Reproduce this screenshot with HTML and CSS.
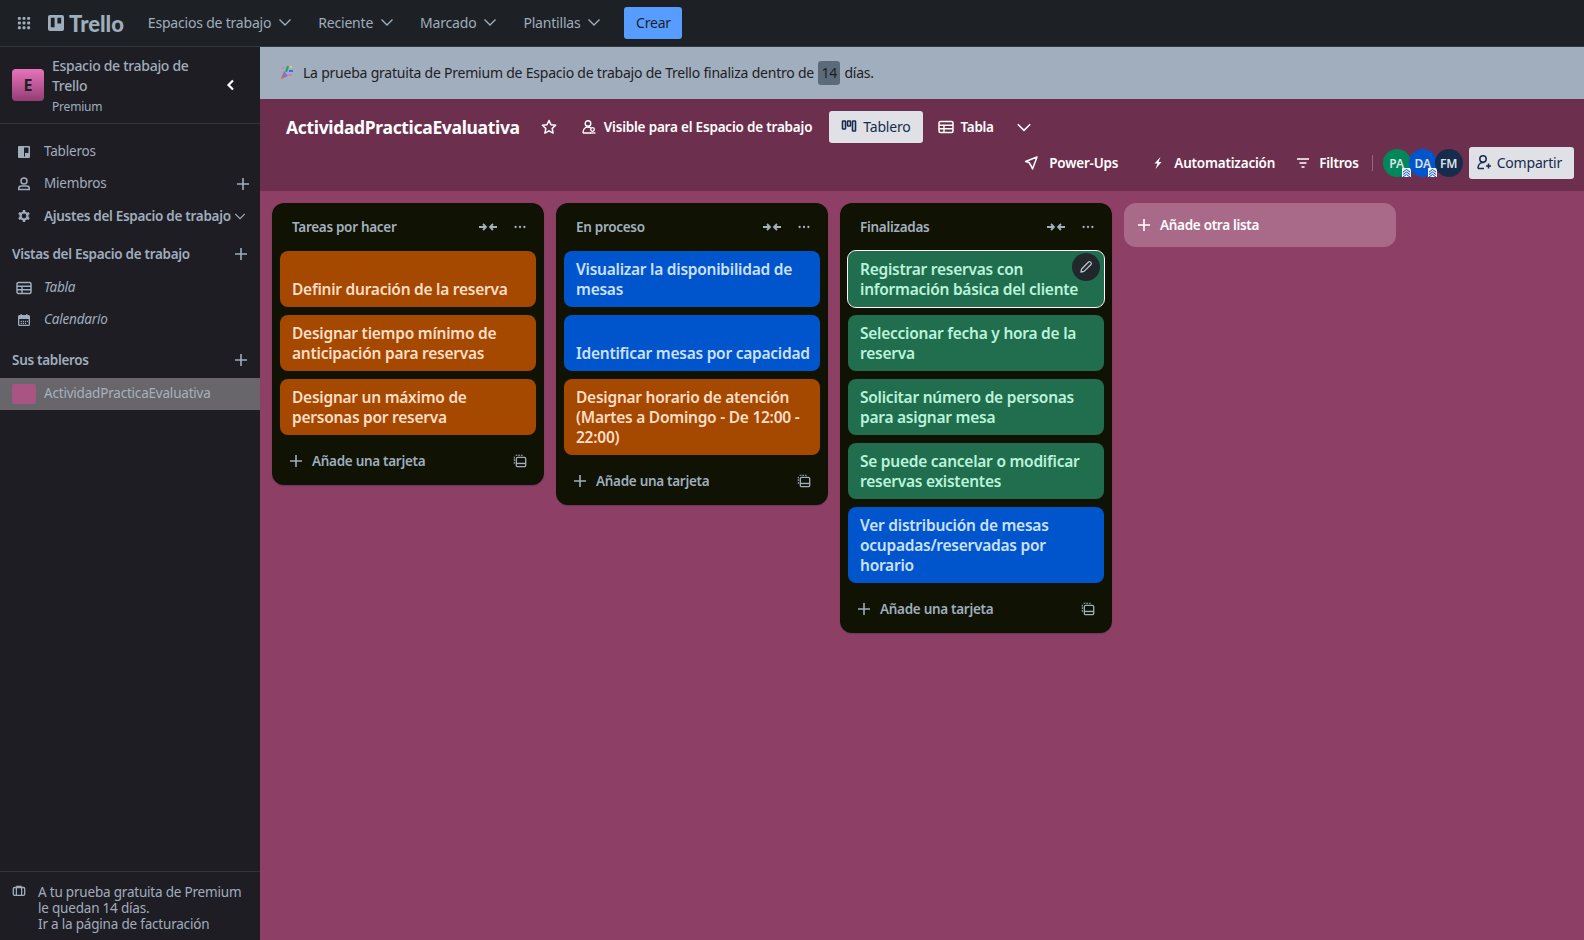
FILE: index.html
```html
<!DOCTYPE html>
<html>
<head>
    <title>ActividadPracticaEvaluativa | Trello</title>
    <link rel="stylesheet" href="styles.css">
</head>
<body>

<svg class="sprites" width="0" height="0">
    <symbol id="i-chev" viewBox="0 0 16 16"><path d="M2.5 5.5 8 11l5.5-5.5" fill="none" stroke="currentColor" stroke-width="1.4"/></symbol>
    <symbol id="i-plus" viewBox="0 0 16 16"><path d="M8 2v12M2 8h12" fill="none" stroke="currentColor" stroke-width="1.6"/></symbol>
    <symbol id="i-collapse" viewBox="0 0 20 12"><path d="M1 6h7M5 3l3 3-3 3M19 6h-7M15 3l-3 3 3 3" fill="none" stroke="currentColor" stroke-width="1.8"/></symbol>
    <symbol id="i-dots" viewBox="0 0 16 4"><circle cx="3" cy="2" r="1.3" fill="currentColor"/><circle cx="8" cy="2" r="1.3" fill="currentColor"/><circle cx="13" cy="2" r="1.3" fill="currentColor"/></symbol>
    <symbol id="i-template" viewBox="0 0 16 16"><path d="M3 1.5h9M1.5 3v8" fill="none" stroke="currentColor" stroke-width="1.2" stroke-dasharray="2 1"/><rect x="3.8" y="3.8" width="10.7" height="10.7" rx="1.5" fill="none" stroke="currentColor" stroke-width="1.5"/><rect x="3.8" y="10" width="10.7" height="1.6" fill="currentColor"/></symbol>
    <symbol id="i-table" viewBox="0 0 16 16"><rect x="1" y="2.5" width="14" height="11" rx="1.5" fill="none" stroke="currentColor" stroke-width="1.5"/><path d="M1 6.2h14M1 9.8h14M6 6v7" fill="none" stroke="currentColor" stroke-width="1.4"/></symbol>
    <symbol id="i-admin" viewBox="0 0 9 9"><rect width="9" height="9" fill="#e9f2ff"/><path d="M1 4 4.5 1.5 8 4M1 6.5 4.5 4 8 6.5M1 9 4.5 6.5 8 9" fill="none" stroke="#0055cc" stroke-width="1"/></symbol>
</svg>

<nav class="topbar">
    <svg class="apps" width="14" height="14" viewBox="0 0 16 16"><g fill="currentColor"><rect x="1" y="1" width="3.4" height="3.4" rx="1"/><rect x="6.3" y="1" width="3.4" height="3.4" rx="1"/><rect x="11.6" y="1" width="3.4" height="3.4" rx="1"/><rect x="1" y="6.3" width="3.4" height="3.4" rx="1"/><rect x="6.3" y="6.3" width="3.4" height="3.4" rx="1"/><rect x="11.6" y="6.3" width="3.4" height="3.4" rx="1"/><rect x="1" y="11.6" width="3.4" height="3.4" rx="1"/><rect x="6.3" y="11.6" width="3.4" height="3.4" rx="1"/><rect x="11.6" y="11.6" width="3.4" height="3.4" rx="1"/></g></svg>
    <div class="logo">
        <svg width="16" height="16" viewBox="0 0 17 17"><path fill-rule="evenodd" fill="currentColor" d="M2 0h13a2 2 0 0 1 2 2v13a2 2 0 0 1-2 2H2a2 2 0 0 1-2-2V2a2 2 0 0 1 2-2zm1 3v10h4V3zm7 0v6h4V3z"/></svg>
        <span>Trello</span>
    </div>
    <div class="top-item">Espacios de trabajo <svg class="chev"><use href="#i-chev"/></svg></div>
    <div class="top-item">Reciente <svg class="chev"><use href="#i-chev"/></svg></div>
    <div class="top-item">Marcado <svg class="chev"><use href="#i-chev"/></svg></div>
    <div class="top-item">Plantillas <svg class="chev"><use href="#i-chev"/></svg></div>
    <button class="create">Crear</button>
</nav>

<div class="layout">

    <aside class="sidebar">
        <div class="side-head">
            <div class="ws-logo">E</div>
            <div class="ws-text">
                <div class="ws-name">Espacio de trabajo de Trello</div>
                <div class="ws-plan">Premium</div>
            </div>
            <svg class="collapse" width="16" height="16" viewBox="0 0 16 16"><path d="M10 3.5 5.5 8l4.5 4.5" fill="none" stroke="currentColor" stroke-width="2.2"/></svg>
        </div>

        <div class="side-nav">
            <div class="side-row">
                <svg class="side-icon" viewBox="0 0 16 16"><path fill-rule="evenodd" fill="currentColor" d="M3 2h10a1 1 0 0 1 1 1v10a1 1 0 0 1-1 1H3a1 1 0 0 1-1-1V3a1 1 0 0 1 1-1zm5 1.5v9h1V9h3.500V3.500z"/></svg>
                <span>Tableros</span>
            </div>
            <div class="side-row">
                <svg class="side-icon" viewBox="0 0 16 16"><circle cx="8" cy="5" r="3" fill="none" stroke="currentColor" stroke-width="1.5"/><path d="M2.750 13.500v-1a2.500 2.500 0 0 1 2.500-2.500h5.500a2.500 2.500 0 0 1 2.500 2.500v1z" fill="none" stroke="currentColor" stroke-width="1.5"/></svg>
                <span>Miembros</span>
                <svg class="row-plus"><use href="#i-plus"/></svg>
            </div>
            <div class="side-row settings">
                <svg class="side-icon" viewBox="0 0 16 16"><circle cx="8" cy="8" r="3.5" fill="none" stroke="currentColor" stroke-width="2.2"/><path d="M8 2v3M8 11v3M2.800 5l2.600 1.500M10.600 9.500l2.600 1.500M2.800 11l2.600-1.500M10.600 6.500 13.200 5" stroke="currentColor" stroke-width="2.4"/></svg>
                <span>Ajustes del Espacio de trabajo</span>
                <svg class="chev side-chev"><use href="#i-chev"/></svg>
            </div>
        </div>

        <div class="side-title">Vistas del Espacio de trabajo <svg class="row-plus"><use href="#i-plus"/></svg></div>
        <div class="side-row view first-view">
            <svg class="side-icon"><use href="#i-table"/></svg>
            <em>Tabla</em>
        </div>
        <div class="side-row view">
            <svg class="side-icon" viewBox="0 0 16 16"><path fill-rule="evenodd" fill="currentColor" d="M4.500 2h1.200v1h4.600V2h1.200v1h1A1.500 1.500 0 0 1 14 4.500v8a1.500 1.500 0 0 1-1.500 1.500h-9A1.500 1.500 0 0 1 2 12.500v-8A1.500 1.500 0 0 1 3.500 3h1zM3.300 7v5.700h9.400V7zm1.400 1.800h1.200V10H4.700zm2.100 0H8V10H6.800zm2.100 0h1.200V10H8.900zm2.100 0h1V10h-1zm-6.300 2h1.200V12H4.700zm2.100 0H8V12H6.800zm2.100 0h1.200V12H8.900z"/></svg>
            <em>Calendario</em>
        </div>

        <div class="side-title boards-title">Sus tableros <svg class="row-plus"><use href="#i-plus"/></svg></div>
        <div class="side-board">
            <div class="swatch"></div>
            <span>ActividadPracticaEvaluativa</span>
        </div>

        <div class="side-foot">
            <svg class="foot-icon" viewBox="0 0 16 16"><path d="M5.500 4V2.800h5V4" fill="none" stroke="currentColor" stroke-width="1.4"/><rect x="1.500" y="4" width="13" height="9" rx="1.500" fill="none" stroke="currentColor" stroke-width="1.5"/><path d="M5 4v9M11 4v9" stroke="currentColor" stroke-width="1.4"/></svg>
            <div>A tu prueba gratuita de Premium<br>le quedan 14 días.<br>Ir a la página de facturación</div>
        </div>
    </aside>

    <main class="main">
        <div class="banner">
            <svg class="confetti" width="16" height="16" viewBox="0 0 16 16">
                <path d="M3 14 6 6l4 5z" fill="#8270db"/>
                <path d="M3 14l1.500-4 2 2.500z" fill="#e56910"/>
                <rect x="8" y="1" width="2" height="6" fill="#22a06b" transform="rotate(20 9 4)"/>
                <rect x="11" y="5" width="4" height="2" fill="#1d7afc"/>
                <rect x="10" y="9" width="4" height="2" fill="#e774bb"/>
                <rect x="4" y="2" width="2" height="2" fill="#e774bb"/>
                <rect x="12" y="1" width="2" height="2" fill="#f5cd47"/>
            </svg>
            <span>La prueba gratuita de Premium de Espacio de trabajo de Trello finaliza dentro de <b class="days">14</b> días.</span>
        </div>

        <header class="board-head">
            <div class="head-row">
                <h1 class="board-title">ActividadPracticaEvaluativa</h1>
                <svg class="star" width="16" height="16" viewBox="0 0 16 16"><path d="m8 1.500 2 4.200 4.600.6-3.400 3.200.9 4.600L8 11.800l-4.100 2.300.9-4.600L1.400 6.300 6 5.700z" fill="none" stroke="currentColor" stroke-width="1.5" stroke-linejoin="round"/></svg>
                <div class="head-btn visible">
                    <svg width="16" height="16" viewBox="0 0 16 16"><circle cx="7" cy="4.500" r="2.800" fill="none" stroke="currentColor" stroke-width="1.4"/><path d="M2 14c0-3.500 2-6 5-6 1 0 2 .4 2.800 1M2 14h8" fill="none" stroke="currentColor" stroke-width="1.4"/><circle cx="11.500" cy="10.500" r="1.800" fill="none" stroke="currentColor" stroke-width="1.3"/><path d="M9 14h5.500" stroke="currentColor" stroke-width="1.3"/></svg>
                    Visible para el Espacio de trabajo
                </div>
                <div class="view-tab">
                    <svg width="16" height="16" viewBox="0 0 16 16"><g fill="none" stroke="currentColor" stroke-width="1.6"><rect x="1.500" y="3" width="3" height="8" rx=".6"/><rect x="6.500" y="3" width="3" height="5" rx=".6"/><rect x="11.500" y="3" width="3" height="10" rx=".6"/></g></svg>
                    Tablero
                </div>
                <div class="head-btn table-btn">
                    <svg width="16" height="16"><use href="#i-table"/></svg>
                    Tabla
                </div>
                <svg class="more-views"><use href="#i-chev"/></svg>
            </div>
            <div class="head-row tools">
                <div class="head-btn power">
                    <svg width="16" height="16" viewBox="0 0 16 16"><path d="M14 2 2.500 6.500l3.500 1 2.500 4L9.500 14z" fill="none" stroke="currentColor" stroke-width="1.5" stroke-linejoin="round"/></svg>
                    Power-Ups
                </div>
                <div class="head-btn auto">
                    <svg width="16" height="16" viewBox="0 0 16 16"><path d="M10.500 2 4.500 8.500H7.500L5.500 14l6-7H8.500z" fill="currentColor"/></svg>
                    Automatización
                </div>
                <div class="head-btn filters">
                    <svg width="16" height="16" viewBox="0 0 16 16"><path d="M2 4h12M4.500 8h7M6.500 12h3" stroke="currentColor" stroke-width="1.6"/></svg>
                    Filtros
                </div>
                <div class="sep"></div>
                <div class="members">
                    <div class="avatar green">PA<svg class="admin"><use href="#i-admin"/></svg></div>
                    <div class="avatar blue">DA<svg class="admin"><use href="#i-admin"/></svg></div>
                    <div class="avatar navy">FM</div>
                </div>
                <button class="share">
                    <svg width="16" height="16" viewBox="0 0 16 16"><circle cx="7" cy="5" r="3.200" fill="none" stroke="currentColor" stroke-width="1.5"/><path d="M2 14.500c0-3.500 2-6 5-6h1M2 14.500h6M12.500 9.500v5M10 12h5" fill="none" stroke="currentColor" stroke-width="1.5"/></svg>
                    Compartir
                </button>
            </div>
        </header>

        <div class="board">

            <section class="list">
                <div class="list-head">
                    <span>Tareas por hacer</span>
                    <svg class="list-collapse"><use href="#i-collapse"/></svg>
                    <svg class="list-dots"><use href="#i-dots"/></svg>
                </div>
                <div class="card orange"><br>Definir duración de la reserva</div>
                <div class="card orange">Designar tiempo mínimo de anticipación para reservas</div>
                <div class="card orange">Designar un máximo de personas por reserva</div>
                <div class="list-foot">
                    <svg class="foot-plus"><use href="#i-plus"/></svg>
                    <span>Añade una tarjeta</span>
                    <svg class="foot-tpl"><use href="#i-template"/></svg>
                </div>
            </section>

            <section class="list">
                <div class="list-head">
                    <span>En proceso</span>
                    <svg class="list-collapse"><use href="#i-collapse"/></svg>
                    <svg class="list-dots"><use href="#i-dots"/></svg>
                </div>
                <div class="card blue-card">Visualizar la disponibilidad de mesas</div>
                <div class="card blue-card"><br>Identificar mesas por capacidad</div>
                <div class="card orange">Designar horario de atención (Martes a Domingo - De 12:00 - 22:00)</div>
                <div class="list-foot">
                    <svg class="foot-plus"><use href="#i-plus"/></svg>
                    <span>Añade una tarjeta</span>
                    <svg class="foot-tpl"><use href="#i-template"/></svg>
                </div>
            </section>

            <section class="list">
                <div class="list-head">
                    <span>Finalizadas</span>
                    <svg class="list-collapse"><use href="#i-collapse"/></svg>
                    <svg class="list-dots"><use href="#i-dots"/></svg>
                </div>
                <div class="card green-card hovered">
                    Registrar reservas con información básica del cliente
                    <div class="edit">
                        <svg width="16" height="16" viewBox="0 0 16 16"><path d="M3 13l.6-3L10.500 3a1.300 1.300 0 0 1 1.900 0l.6.6a1.300 1.300 0 0 1 0 1.900L6 12.400z" fill="none" stroke="currentColor" stroke-width="1.3" stroke-linejoin="round"/></svg>
                    </div>
                </div>
                <div class="card green-card">Seleccionar fecha y hora de la reserva</div>
                <div class="card green-card">Solicitar número de personas para asignar mesa</div>
                <div class="card green-card">Se puede cancelar o modificar reservas existentes</div>
                <div class="card blue-card">Ver distribución de mesas ocupadas/reservadas por horario</div>
                <div class="list-foot">
                    <svg class="foot-plus"><use href="#i-plus"/></svg>
                    <span>Añade una tarjeta</span>
                    <svg class="foot-tpl"><use href="#i-template"/></svg>
                </div>
            </section>

            <div class="add-list">
                <svg class="add-plus"><use href="#i-plus"/></svg>
                Añade otra lista
            </div>

        </div>
    </main>
</div>

</body>
</html>
```

FILE: styles.css
```css
* {
    box-sizing: border-box;
}

body {
    margin: 0;
    height: 940px;
    overflow: hidden;
    font-family: "Noto Sans", "Open Sans", sans-serif;
    font-size: 14px;
    letter-spacing: -0.2px;
    color: #9fadbc;
    background-color: #8e3f65;
}

.sprites {
    display: block;
    height: 0;
}

/* top bar */
.topbar {
    display: flex;
    align-items: center;
    height: 47px;
    padding-left: 17px;
    background-color: #1d2125;
    border-bottom: 1px solid #31383f;
}

.logo {
    display: flex;
    align-items: center;
    gap: 5px;
    margin-left: 17px;
    margin-right: 24px;
    font-family: "Lato", sans-serif;
    font-size: 22px;
    font-weight: 900;
    letter-spacing: 0;
}

.top-item {
    display: flex;
    align-items: center;
    gap: 6px;
    margin-right: 25px;
    padding-bottom: 2px;
}

.top-item:last-of-type {
    margin-right: 22px;
}

.chev {
    width: 16px;
    height: 16px;
}

.create {
    width: 58px;
    height: 32px;
    padding: 0 0 2px;
    border: 0;
    border-radius: 3px;
    background-color: #579dff;
    color: #1d2125;
    font-family: inherit;
    font-size: 14px;
    letter-spacing: inherit;
}

/* page below the top bar */
.layout {
    display: flex;
    height: 893px;
}

.sidebar {
    display: flex;
    flex-direction: column;
    width: 260px;
    flex-shrink: 0;
    background-color: #1f1d24;
}

.side-head {
    display: flex;
    align-items: center;
    height: 77px;
    padding-left: 12px;
    border-bottom: 1px solid #34323a;
}

.ws-logo {
    display: flex;
    align-items: center;
    justify-content: center;
    width: 32px;
    height: 32px;
    flex-shrink: 0;
    border-radius: 4px;
    background: linear-gradient(#e774bb, #943d73);
    color: #1d2125;
    font-size: 16px;
    font-weight: 700;
}

.ws-text {
    width: 150px;
    margin-left: 8px;
}

.ws-name {
    font-weight: 500;
    letter-spacing: -0.3px;
    line-height: 20px;
}

.ws-plan {
    margin-top: 3px;
    font-size: 12px;
    line-height: 16px;
}

.collapse {
    margin-left: 21px;
    color: #fff;
}

.side-nav {
    padding-top: 12px;
}

.side-row {
    display: flex;
    align-items: center;
    height: 32px;
    padding-left: 16px;
    font-size: 13.5px;
}

.side-row span,
.side-row em {
    margin-left: 12px;
    margin-bottom: 2px;
}

.side-icon {
    width: 16px;
    height: 16px;
    flex-shrink: 0;
}

.row-plus {
    width: 16px;
    height: 16px;
    margin-left: auto;
    margin-right: 9px;
    flex-shrink: 0;
}

.settings {
    font-weight: 600;
    letter-spacing: -0.3px;
}

.settings span {
    margin-bottom: 0;
    white-space: nowrap;
}

.side-chev {
    flex-shrink: 0;
    margin-left: 2px;
    width: 14px;
    height: 14px;
}

.side-title {
    display: flex;
    align-items: center;
    height: 32px;
    margin-top: 6px;
    padding-left: 12px;
    font-size: 13.5px;
    font-weight: 600;
    letter-spacing: -0.3px;
}

.side-title .row-plus {
    margin-right: 11px;
}

.boards-title {
    margin-top: 8px;
}

.first-view {
    margin-top: 2px;
}

.side-board {
    display: flex;
    align-items: center;
    height: 32px;
    margin-top: 2px;
    padding-left: 12px;
    background-color: #68666b;
    color: #a6b1bd;
    font-size: 13.5px;
}

.side-board span {
    margin-bottom: 2px;
}

.swatch {
    width: 24px;
    height: 20px;
    border-radius: 2px;
    background-color: #a85583;
    margin-right: 8px;
}

.side-foot {
    display: flex;
    align-items: flex-start;
    gap: 12px;
    margin-top: auto;
    height: 69px;
    padding: 12px 0 0 12px;
    font-size: 13.5px;
    line-height: 16px;
    white-space: nowrap;
    border-top: 1px solid #34323a;
}

.foot-icon {
    width: 14px;
    height: 14px;
    flex-shrink: 0;
}

/* main area */
.main {
    flex: 1;
    min-width: 0;
}

.banner {
    display: flex;
    align-items: center;
    gap: 9px;
    height: 52px;
    padding-left: 18px;
    background-color: #a1aebe;
    color: #1d2125;
    letter-spacing: -0.22px;
}

.days {
    display: inline-block;
    padding: 0 3px;
    margin: 0 1px;
    background-color: #5c6b79;
    border-radius: 3px;
    font-weight: 400;
    line-height: 24px;
}

.board-head {
    height: 92px;
    padding: 12px 10px 0 26px;
    background-color: #6d2f4e;
    color: #fff;
    font-size: 13.5px;
    font-weight: 600;
}

.head-row {
    display: flex;
    align-items: center;
    height: 32px;
}

.tools {
    justify-content: flex-end;
    margin-top: 4px;
}

.board-title {
    margin: 0;
    font-size: 17.5px;
    font-weight: 700;
    letter-spacing: -0.33px;
}

.star {
    margin-left: 21px;
}

.head-btn {
    display: flex;
    align-items: center;
    gap: 7px;
}

.visible {
    margin-left: 24px;
}

.view-tab {
    display: flex;
    align-items: center;
    gap: 6px;
    height: 32px;
    margin-left: 17px;
    padding: 0 12px 2px;
    border-radius: 3px;
    background-color: #dfe1e6;
    color: #172b4d;
    font-size: 14px;
    font-weight: 400;
}

.table-btn {
    margin-left: 15px;
    letter-spacing: -0.3px;
}

.more-views {
    width: 18px;
    height: 18px;
    margin-left: 21px;
}

.power {
    margin-right: 32px;
    gap: 10px;
}

.auto {
    margin-right: 20px;
    gap: 8px;
}

.filters {
    gap: 8px;
}

.sep {
    width: 1px;
    height: 16px;
    margin: 0 10px 0 13px;
    background-color: #8e6a80;
}

.members {
    display: flex;
    margin-right: 6px;
}

.avatar {
    position: relative;
    display: flex;
    align-items: center;
    justify-content: center;
    width: 28px;
    height: 28px;
    margin-right: -2px;
    border-radius: 50%;
    font-size: 12px;
    letter-spacing: 0;
    color: #dfe1e6;
}

.green {
    background-color: #00875a;
}

.blue {
    background-color: #0055cc;
}

.navy {
    background-color: #172b4d;
    margin-right: 0;
}

.admin {
    position: absolute;
    right: 0;
    bottom: 0;
    width: 9px;
    height: 9px;
}

.share {
    display: flex;
    align-items: center;
    gap: 5px;
    height: 32px;
    padding: 0 12px 2px 7px;
    border: 0;
    border-radius: 3px;
    background-color: #dfe1e6;
    color: #172b4d;
    font-family: inherit;
    font-size: 14px;
    letter-spacing: inherit;
}

/* lists */
.board {
    display: flex;
    align-items: flex-start;
    gap: 12px;
    padding: 12px 12px 0 12px;
}

.list {
    width: 272px;
    flex-shrink: 0;
    padding: 0 8px 6px;
    border-radius: 12px;
    background-color: #101204;
    box-shadow: 0 1px 1px #091e4240;
}

.list-head {
    display: flex;
    align-items: center;
    height: 48px;
    padding-left: 12px;
    padding-bottom: 1px;
    font-size: 13.5px;
    font-weight: 600;
    letter-spacing: -0.3px;
    color: #a3b0bd;
}

.list-collapse {
    width: 20px;
    height: 12px;
    margin-left: auto;
    margin-right: 15px;
}

.list-dots {
    width: 14px;
    height: 4px;
    margin-right: 9px;
}

.card {
    position: relative;
    min-height: 56px;
    margin-bottom: 8px;
    padding: 8px 8px 8px 12px;
    border-radius: 8px;
    font-size: 15.5px;
    font-weight: 600;
    letter-spacing: -0.25px;
    line-height: 20px;
}

.orange {
    background-color: #a54800;
    color: #fedec8;
}

.blue-card {
    background-color: #0055cc;
    color: #cce0ff;
}

.green-card {
    background-color: #216e4e;
    color: #baf3db;
}

.hovered {
    outline: 1px solid #fff;
}

.edit {
    position: absolute;
    top: 2px;
    right: 4px;
    display: flex;
    align-items: center;
    justify-content: center;
    width: 28px;
    height: 28px;
    border-radius: 50%;
    background-color: #22272b;
    color: #b6c2cf;
}

.list-foot {
    display: flex;
    align-items: center;
    height: 36px;
    font-size: 13.5px;
    font-weight: 600;
    letter-spacing: -0.3px;
    color: #9fadbc;
}

.foot-plus {
    width: 16px;
    height: 16px;
    margin-left: 8px;
    margin-right: 8px;
}

.foot-tpl {
    width: 14px;
    height: 14px;
    margin-left: auto;
    margin-right: 9px;
}

.add-list {
    display: flex;
    align-items: center;
    width: 272px;
    height: 44px;
    padding-left: 12px;
    border-radius: 12px;
    background-color: #a96a8a;
    color: #fff;
    font-size: 13.5px;
    font-weight: 600;
    letter-spacing: -0.3px;
}

.add-plus {
    width: 16px;
    height: 16px;
    margin-right: 8px;
}
```
